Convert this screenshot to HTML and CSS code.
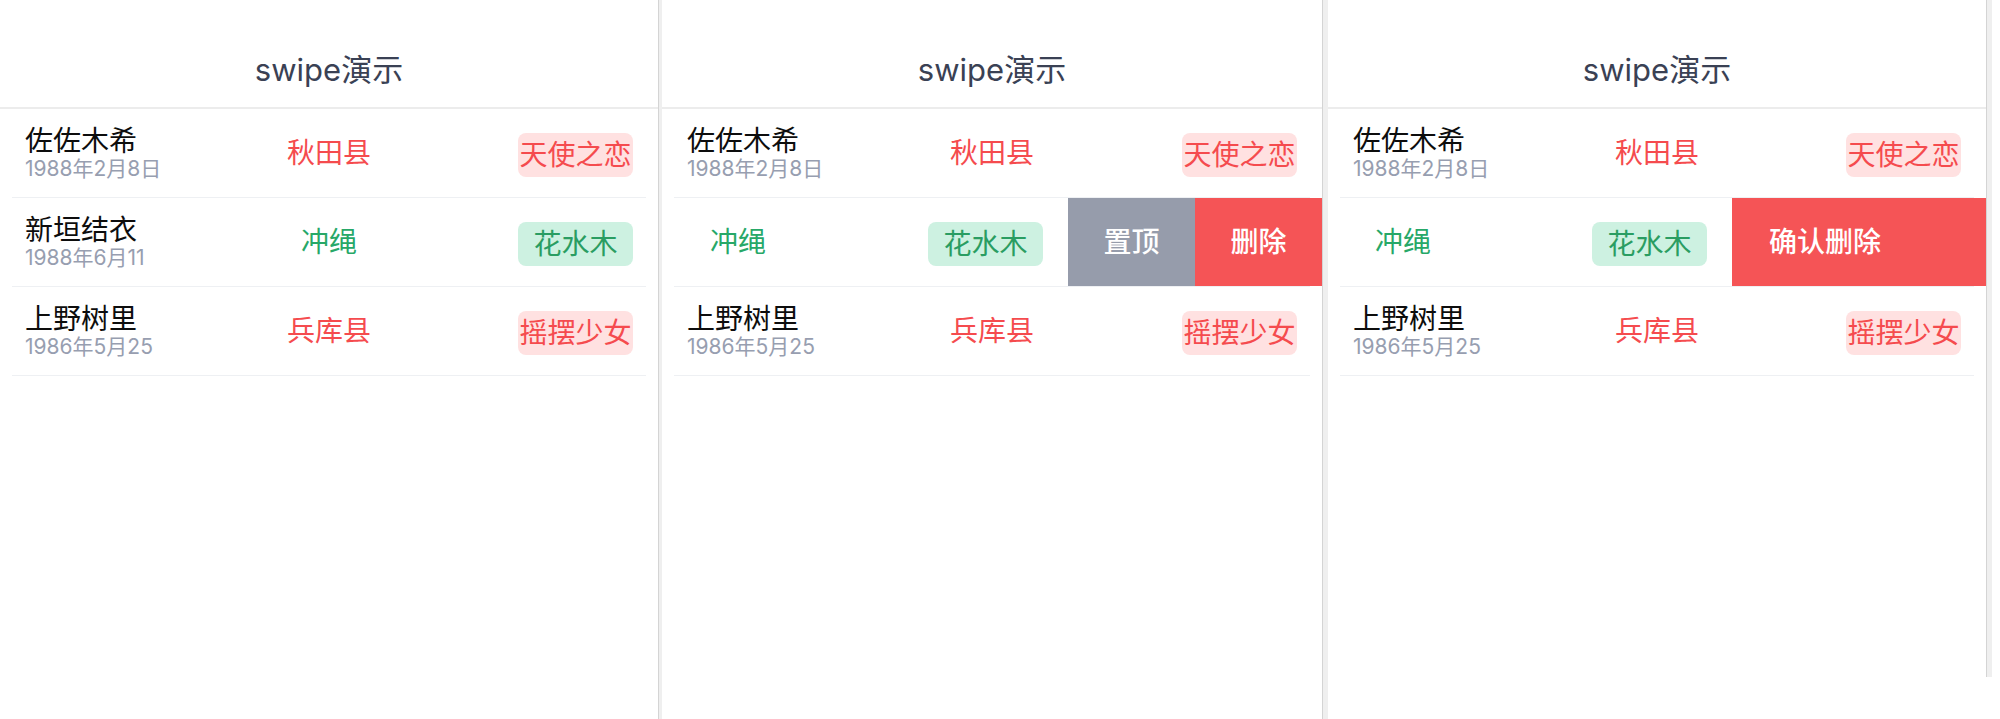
FILE: index.html
```html
<!DOCTYPE html>
<html lang="zh-CN">
<head>
<meta charset="utf-8">
<title>swipe演示</title>
<link rel="stylesheet" href="styles.css">
</head>
<body>
<div class="stage">
  <section class="phone w658">
    <header class="nav"><h1 class="nav-title">swipe演示</h1></header>
    <div class="list">
      <div class="cell"><div class="track"><div class="content">
        <div class="who"><div class="name">佐佐木希</div><div class="date">1988年2月8日</div></div>
        <div class="place red">秋田县</div>
        <div class="tag tag-red">天使之恋</div>
      </div></div></div>
      <div class="sep"></div>
      <div class="cell"><div class="track"><div class="content">
        <div class="who"><div class="name">新垣结衣</div><div class="date">1988年6月11</div></div>
        <div class="place green">冲绳</div>
        <div class="tag tag-green">花水木</div>
      </div></div></div>
      <div class="sep"></div>
      <div class="cell"><div class="track"><div class="content">
        <div class="who"><div class="name">上野树里</div><div class="date">1986年5月25</div></div>
        <div class="place red">兵库县</div>
        <div class="tag tag-red">摇摆少女</div>
      </div></div></div>
      <div class="sep"></div>
    </div>
  </section>
  <div class="gutter g-narrow"></div>

  <section class="phone w660">
    <header class="nav"><h1 class="nav-title">swipe演示</h1></header>
    <div class="list">
      <div class="cell"><div class="track"><div class="content">
        <div class="who"><div class="name">佐佐木希</div><div class="date">1988年2月8日</div></div>
        <div class="place red">秋田县</div>
        <div class="tag tag-red">天使之恋</div>
      </div></div></div>
      <div class="sep"></div>
      <div class="cell"><div class="track swiped"><div class="content">
        <div class="who"><div class="name">新垣结衣</div><div class="date">1988年6月11</div></div>
        <div class="place green">冲绳</div>
        <div class="tag tag-green">花水木</div>
      </div>
      <div class="actions">
        <div class="btn btn-gray">置顶</div>
        <div class="btn btn-red">删除</div>
      </div></div></div>
      <div class="sep"></div>
      <div class="cell"><div class="track"><div class="content">
        <div class="who"><div class="name">上野树里</div><div class="date">1986年5月25</div></div>
        <div class="place red">兵库县</div>
        <div class="tag tag-red">摇摆少女</div>
      </div></div></div>
      <div class="sep"></div>
    </div>
  </section>
  <div class="gutter"></div>

  <section class="phone w658 short">
    <header class="nav"><h1 class="nav-title">swipe演示</h1></header>
    <div class="list">
      <div class="cell"><div class="track"><div class="content">
        <div class="who"><div class="name">佐佐木希</div><div class="date">1988年2月8日</div></div>
        <div class="place red">秋田县</div>
        <div class="tag tag-red">天使之恋</div>
      </div></div></div>
      <div class="sep"></div>
      <div class="cell"><div class="track swiped"><div class="content">
        <div class="who"><div class="name">新垣结衣</div><div class="date">1988年6月11</div></div>
        <div class="place green">冲绳</div>
        <div class="tag tag-green">花水木</div>
      </div>
      <div class="actions">
        <div class="btn btn-red btn-confirm">确认删除</div>
      </div></div></div>
      <div class="sep"></div>
      <div class="cell"><div class="track"><div class="content">
        <div class="who"><div class="name">上野树里</div><div class="date">1986年5月25</div></div>
        <div class="place red">兵库县</div>
        <div class="tag tag-red">摇摆少女</div>
      </div></div></div>
      <div class="sep"></div>
    </div>
  </section>
  <div class="gutter short"></div>
</div>
</body>
</html>
```

FILE: styles.css
```css
* { box-sizing: border-box; }
html, body { margin: 0; padding: 0; background: #fff; }
body {
  font-family: Inter, "Noto Sans CJK SC", sans-serif;
  color: #111;
}
.stage {
  display: flex;
  align-items: stretch;
  height: 719px;
}
.phone {
  flex: 0 0 auto;
  height: 719px;
  background: #fff;
  overflow: hidden;
}
.w658 { width: 658px; }
.w660 { width: 660px; }
.phone.short { height: 677px; }

.gutter {
  flex: 0 0 6px;
  border-left: 1px solid #d4d4d4;
  background: #efefef;
}
.gutter.g-narrow { flex-basis: 4px; }
.gutter.short { align-self: flex-start; height: 677px; }

.nav {
  height: 109px;
  border-bottom: 2px solid #ececec;
  padding-top: 50px;
}
.nav-title {
  margin: 0;
  text-align: center;
  font-size: 31px;
  line-height: 40px;
  font-weight: 400;
  color: #3a4154;
}

.list { display: flex; flex-direction: column; }
.cell { overflow: hidden; height: 88px; }
.track { display: flex; height: 100%; }
.track.swiped { transform: translateX(-254px); }
.track.swiped .who { visibility: hidden; }
.content {
  flex: 0 0 100%;
  display: grid;
  grid-template-columns: 1fr 1fr 1fr;
  align-items: center;
  padding: 0 25px;
}
.sep {
  height: 1px;
  margin: 0 12px;
  background: #eef0f3;
}

.who { display: flex; flex-direction: column; }
.name {
  font-size: 28px;
  line-height: 32px;
  color: #0d0d0d;
  white-space: nowrap;
}
.date {
  font-size: 21px;
  line-height: 24px;
  color: #979eb0;
  white-space: nowrap;
}
.place {
  text-align: center;
  font-size: 28px;
  line-height: 40px;
}
.red { color: #f54b4e; }
.green { color: #27a868; }

.tag {
  justify-self: end;
  width: 115px;
  margin-top: 4px;
  text-align: center;
  font-size: 28px;
  line-height: 40px;
  padding: 2px 0;
  border-radius: 8px;
  white-space: nowrap;
}
.tag-red { background: #ffe1e1; color: #f54b4e; }
.tag-green { background: #cdf1e1; color: #2a9d62; }

.actions {
  flex: 0 0 254px;
  display: flex;
}
.btn {
  flex: 1 1 0;
  display: flex;
  align-items: center;
  justify-content: center;
  color: #fff;
  font-size: 28px;
  line-height: 40px;
  font-weight: 500;
}
.btn-gray { background: #969cab; }
.btn-red { background: #f55456; }
.btn-confirm { justify-content: flex-start; padding-left: 37px; }
```
